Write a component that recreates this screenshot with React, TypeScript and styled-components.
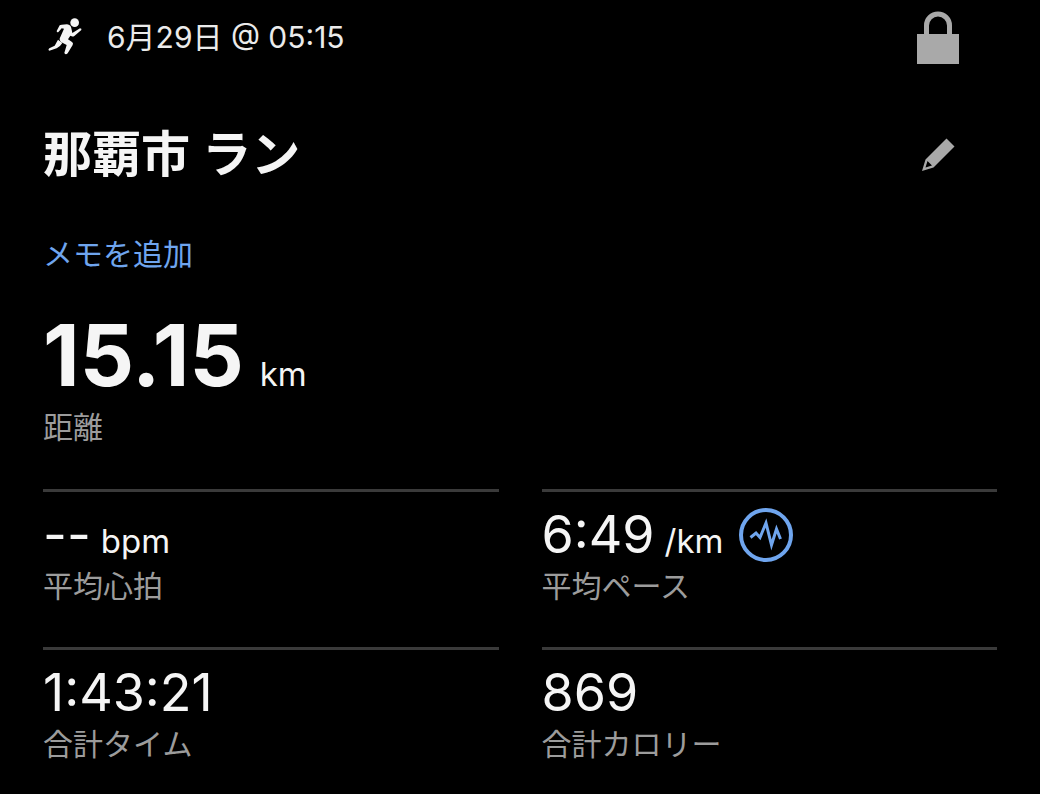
import React from "react";
import styled, { createGlobalStyle } from "styled-components";

const GlobalStyle = createGlobalStyle`
  *, *::before, *::after { box-sizing: border-box; }
  body {
    margin: 0;
    background: #000;
    color: #f5f5f5;
    font-family: Inter, "Noto Sans CJK JP", sans-serif;
  }
`;

const Page = styled.main`
  padding: 0 43px 24px;
`;

const TopBar = styled.header`
  display: flex;
  align-items: center;
  height: 74px;
  padding: 0 31px 0 4px;
`;

const StartTime = styled.time`
  flex: 1;
  margin-left: 23px;
  font-size: 30px;
  line-height: 40px;
  color: #ebebeb;
`;

const IconButton = styled.button`
  display: flex;
  align-items: center;
  justify-content: center;
  width: 56px;
  height: 56px;
  padding: 0;
  border: 0;
  background: none;
  color: #a9a9a9;
  cursor: pointer;
`;

const TitleRow = styled.div`
  display: flex;
  align-items: center;
  justify-content: space-between;
  height: 80px;
  margin-top: 41px;
  padding-right: 31px;
`;

const Title = styled.h1`
  margin: 0;
  font-size: 49px;
  line-height: 64px;
  font-weight: 600;
`;

const MemoLink = styled.a`
  display: block;
  width: fit-content;
  margin-top: 39px;
  font-size: 30px;
  line-height: 40px;
  color: #6fa5ee;
  text-decoration: none;
`;

const Stats = styled.dl`
  display: grid;
  grid-template-columns: 1fr 1fr;
  column-gap: 43px;
  row-gap: 41px;
  margin: 42px 0 0;
`;

const Stat = styled.div`
  display: flex;
  flex-direction: column-reverse;
  padding-top: 11px;
  border-top: 3px solid #3a3a3a;
`;

const Summary = styled.dl`
  display: flex;
  flex-direction: column-reverse;
  margin: 40px 0 0;
`;

const Label = styled.dt`
  font-size: 30px;
  line-height: 40px;
  color: #9c9c9c;
`;

const Value = styled.dd<{ $large?: boolean }>`
  display: flex;
  align-items: baseline;
  gap: ${(p) => (p.$large ? 16 : 10)}px;
  height: ${(p) => (p.$large ? 93 : 63)}px;
  margin: 0;
  font-size: ${(p) => (p.$large ? 85 : 52)}px;
  line-height: ${(p) => (p.$large ? 84 : 64)}px;
  font-weight: ${(p) => (p.$large ? 700 : 400)};
`;

const Unit = styled.span`
  font-size: 33px;
  font-weight: 400;
  line-height: 40px;
`;

const PaceButton = styled(IconButton)`
  align-self: center;
  margin-left: 4px;
  color: #6fa5ee;
`;

const RunnerIcon = () => (
  <svg width="37" height="38" viewBox="20 26 111 114" fill="currentColor" aria-hidden="true">
    <circle cx="103" cy="40" r="13" />
    <path d="M49 65 L58 48 Q60 46 64 46 L80 45 Q92 47 93 57 L96 71 L119 57 Q125 57 123 62 L102 80 Q98 83 94 81 L90 79 L83 90 L95 98 Q100 101 97 107 L82 132 Q76 138 72 131 L79 107 L62 98 Q55 91 60 83 L71 58 L64 57 L55 67 Q50 71 49 65 Z" />
    <path d="M53 91 L66 101 Q58 114 49 117 L27 124 Q22 122 27 117 L43 109 Z" />
  </svg>
);

const LockIcon = () => (
  <svg width="42" height="54" viewBox="0 0 42 54" aria-hidden="true">
    <path d="M9.500 26V15.500a11.500 11.500 0 0 1 23 0V26" fill="none" stroke="currentColor" strokeWidth="5" />
    <path d="M0 24h42v30H0z" fill="currentColor" />
  </svg>
);

const PencilIcon = () => (
  <svg width="34" height="34" viewBox="0 0 34 34" fill="currentColor" fillRule="evenodd" aria-hidden="true">
    <path d="M25.500 0.500 L33.500 8.500 L12.500 29.500 L1 33 L4.500 21.500 Z M6.500 23 L4.500 29.500 L11 27.500 Z" />
  </svg>
);

const PaceIcon = () => (
  <svg width="54" height="54" viewBox="0 0 54 54" fill="none" stroke="currentColor" aria-hidden="true">
    <circle cx="27" cy="27" r="25" strokeWidth="4" />
    <path d="M11.500 29.500 L17 25 L21 29.500 L27 15 L32.500 37 L37.500 21 L41.500 31" strokeWidth="3" strokeMiterlimit="8" />
  </svg>
);

type Metric = { label: string; value: string; unit?: string; trend?: boolean };

const metrics: Metric[] = [
  { label: "平均心拍", value: "--", unit: "bpm" },
  { label: "平均ペース", value: "6:49", unit: "/km", trend: true },
  { label: "合計タイム", value: "1:43:21" },
  { label: "合計カロリー", value: "869" },
];

export default function App() {
  return (
    <>
      <GlobalStyle />
      <Page lang="ja">
        <TopBar>
          <RunnerIcon />
          <StartTime dateTime="06-29T05:15">6月29日 @ 05:15</StartTime>
          <IconButton type="button" aria-label="公開設定">
            <LockIcon />
          </IconButton>
        </TopBar>
        <TitleRow>
          <Title>那覇市 ラン</Title>
          <IconButton type="button" aria-label="編集">
            <PencilIcon />
          </IconButton>
        </TitleRow>
        <MemoLink href="#memo">メモを追加</MemoLink>
        <Summary>
          <Label>距離</Label>
          <Value $large>
            15.15<Unit>km</Unit>
          </Value>
        </Summary>
        <Stats>
          {metrics.map((m) => (
            <Stat key={m.label}>
              <Label>{m.label}</Label>
              <Value>
                {m.value}
                {m.unit && <Unit>{m.unit}</Unit>}
                {m.trend && (
                  <PaceButton type="button" aria-label="ペースのグラフ">
                    <PaceIcon />
                  </PaceButton>
                )}
              </Value>
            </Stat>
          ))}
        </Stats>
      </Page>
    </>
  );
}
